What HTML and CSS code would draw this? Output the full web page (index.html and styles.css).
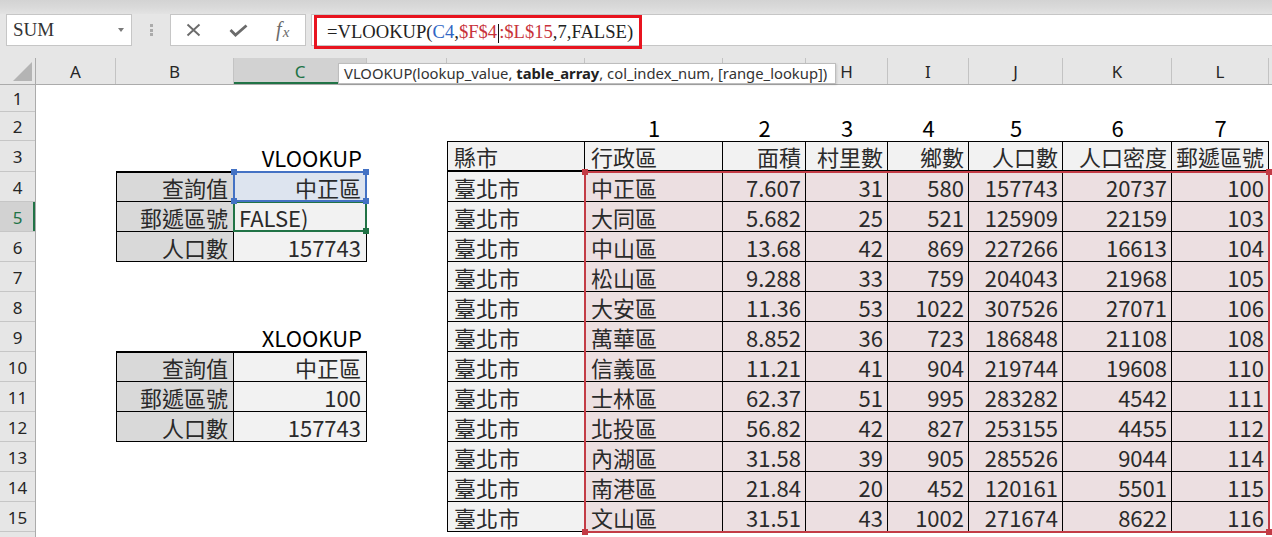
FILE: index.html
```html
<!DOCTYPE html>
<html lang="zh-Hant">
<head>
<meta charset="utf-8">
<title>VLOOKUP</title>
<link rel="stylesheet" href="styles.css">
</head>
<body>
<div class="top">
  <div class="ribbon-edge"></div>
  <div class="fbar">
    <div class="namebox"><span class="nb-text">SUM</span><span class="nb-arrow"></span></div>
    <div class="grip"><i></i><i></i><i></i></div>
    <div class="fbtns">
      <div class="slot"><svg width="15" height="14" viewBox="0 0 15 14"><path d="M1.5 1.5 L13.5 12.5 M13.5 1.5 L1.5 12.5" stroke="#6b6b6b" stroke-width="1.9" fill="none"/></svg></div>
      <div class="slot"><svg width="19" height="13" viewBox="0 0 19 13"><path d="M1.5 6 L6.5 11 L17.5 1.5" stroke="#6b6b6b" stroke-width="2.8" fill="none"/></svg></div>
      <div class="slot"><span class="fx">f<span class="fx-x">x</span></span></div>
    </div>
    <div class="finput">
      <div class="fhl"><span class="ftext">=VLOOKUP(<span class="rb">C4</span>,<span class="rr">$F$4</span><span class="caret"></span><span class="rr">:$L$15</span>,7,FALSE)</span></div>
    </div>
  </div>
</div>

<div class="colheads">
  <div class="corner"><span class="tri"></span></div>
  <div class="ch w-a">A</div>
  <div class="ch w-b">B</div>
  <div class="ch w-c sel">C</div>
  <div class="ch w-d">D</div>
  <div class="ch w-e">E</div>
  <div class="ch w-f">F</div>
  <div class="ch w-g">G</div>
  <div class="ch w-h">H</div>
  <div class="ch w-i">I</div>
  <div class="ch w-j">J</div>
  <div class="ch w-k">K</div>
  <div class="ch w-l">L</div>
  <div class="ch w-rest"></div>
</div>

<div class="tooltip">VLOOKUP(lookup_value, <b>table_array</b>, col_index_num, [range_lookup])</div>

<div class="sheet">
  <div class="rowheads">
    <div class="rh h27">1</div>
    <div class="rh h29">2</div>
    <div class="rh h31">3</div>
    <div class="rh">4</div>
    <div class="rh sel">5</div>
    <div class="rh">6</div>
    <div class="rh">7</div>
    <div class="rh">8</div>
    <div class="rh">9</div>
    <div class="rh">10</div>
    <div class="rh">11</div>
    <div class="rh">12</div>
    <div class="rh">13</div>
    <div class="rh">14</div>
    <div class="rh">15</div>
    <div class="rh"></div>
  </div>

  <div class="cells">
    <div class="title t-vl">VLOOKUP</div>
    <div class="ltab lt1">
      <div class="lc lab">查詢值</div>
      <div class="lc val c4">中正區<span class="selbox blue"><i class="k tl"></i><i class="k tr"></i><i class="k bl"></i><i class="k br"></i></span></div>
      <div class="lc lab">郵遞區號</div>
      <div class="lc val edit">FALSE)<span class="selbox green"><i class="k br"></i></span></div>
      <div class="lc lab">人口數</div>
      <div class="lc val">157743</div>
    </div>

    <div class="title t-xl">XLOOKUP</div>
    <div class="ltab lt2">
      <div class="lc lab">查詢值</div>
      <div class="lc val">中正區</div>
      <div class="lc lab">郵遞區號</div>
      <div class="lc val">100</div>
      <div class="lc lab">人口數</div>
      <div class="lc val">157743</div>
    </div>

    <div class="idx">
      <div>1</div><div>2</div><div>3</div><div>4</div><div>5</div><div>6</div><div>7</div>
    </div>

    <div class="btab">
      <div class="c h l">縣市</div><div class="c h l">行政區</div><div class="c h">面積</div><div class="c h">村里數</div><div class="c h">鄉數</div><div class="c h">人口數</div><div class="c h">人口密度</div><div class="c h">郵遞區號</div>

      <div class="c e l">臺北市</div><div class="c p l">中正區</div><div class="c p">7.607</div><div class="c p">31</div><div class="c p">580</div><div class="c p">157743</div><div class="c p">20737</div><div class="c p">100</div>
      <div class="c e l">臺北市</div><div class="c p l">大同區</div><div class="c p">5.682</div><div class="c p">25</div><div class="c p">521</div><div class="c p">125909</div><div class="c p">22159</div><div class="c p">103</div>
      <div class="c e l">臺北市</div><div class="c p l">中山區</div><div class="c p">13.68</div><div class="c p">42</div><div class="c p">869</div><div class="c p">227266</div><div class="c p">16613</div><div class="c p">104</div>
      <div class="c e l">臺北市</div><div class="c p l">松山區</div><div class="c p">9.288</div><div class="c p">33</div><div class="c p">759</div><div class="c p">204043</div><div class="c p">21968</div><div class="c p">105</div>
      <div class="c e l">臺北市</div><div class="c p l">大安區</div><div class="c p">11.36</div><div class="c p">53</div><div class="c p">1022</div><div class="c p">307526</div><div class="c p">27071</div><div class="c p">106</div>
      <div class="c e l">臺北市</div><div class="c p l">萬華區</div><div class="c p">8.852</div><div class="c p">36</div><div class="c p">723</div><div class="c p">186848</div><div class="c p">21108</div><div class="c p">108</div>
      <div class="c e l">臺北市</div><div class="c p l">信義區</div><div class="c p">11.21</div><div class="c p">41</div><div class="c p">904</div><div class="c p">219744</div><div class="c p">19608</div><div class="c p">110</div>
      <div class="c e l">臺北市</div><div class="c p l">士林區</div><div class="c p">62.37</div><div class="c p">51</div><div class="c p">995</div><div class="c p">283282</div><div class="c p">4542</div><div class="c p">111</div>
      <div class="c e l">臺北市</div><div class="c p l">北投區</div><div class="c p">56.82</div><div class="c p">42</div><div class="c p">827</div><div class="c p">253155</div><div class="c p">4455</div><div class="c p">112</div>
      <div class="c e l">臺北市</div><div class="c p l">內湖區</div><div class="c p">31.58</div><div class="c p">39</div><div class="c p">905</div><div class="c p">285526</div><div class="c p">9044</div><div class="c p">114</div>
      <div class="c e l">臺北市</div><div class="c p l">南港區</div><div class="c p">21.84</div><div class="c p">20</div><div class="c p">452</div><div class="c p">120161</div><div class="c p">5501</div><div class="c p">115</div>
      <div class="c e l">臺北市</div><div class="c p l">文山區</div><div class="c p">31.51</div><div class="c p">43</div><div class="c p">1002</div><div class="c p">271674</div><div class="c p">8622</div><div class="c p">116</div>

      <div class="range"><i class="k tl"></i><i class="k tr"></i><i class="k bl"></i><i class="k br"></i></div>
    </div>
  </div>
</div>
</body>
</html>
```
FILE: styles.css
```css
* { box-sizing: border-box; }
html, body { margin: 0; padding: 0; }
body {
  width: 1272px;
  height: 537px;
  overflow: hidden;
  background: #fff;
  position: relative;
  font-family: "Noto Sans", sans-serif;
  color: #222;
}

/* ---------- top: ribbon edge + formula bar ---------- */
.top { height: 58px; background: #e6e6e6; }
.ribbon-edge {
  height: 14px;
  background: linear-gradient(#d3d3d3, #dadada 55%, #e3e3e3);
}
.fbar { display: flex; height: 32px; padding-left: 6px; }
.namebox {
  width: 126px;
  border: 1px solid #c6c6c6;
  background: #fff;
  display: flex;
  align-items: center;
  padding-left: 6px;
}
.nb-text { font-family: "Liberation Serif", serif; font-size: 19px; color: #333; }
.nb-arrow {
  margin-left: auto;
  margin-right: 7px;
  width: 0; height: 0;
  border-left: 3.5px solid transparent;
  border-right: 3.5px solid transparent;
  border-top: 4px solid #7a7a7a;
}
.grip {
  width: 38px;
  display: flex;
  flex-direction: column;
  align-items: center;
  justify-content: center;
  gap: 1.5px;
}
.grip i { display: block; width: 3px; height: 3px; background: #ababab; }
.fbtns {
  width: 136px;
  border: 1px solid #c6c6c6;
  background: #fff;
  display: flex;
  align-items: center;
}
.slot { width: 45px; display: flex; justify-content: center; align-items: center; }
.fx {
  font-family: "Liberation Serif", serif;
  font-style: italic;
  font-size: 20px;
  color: #6b6b6b;
  line-height: 1;
  margin-top: -2px;
}
.fx-x { font-size: 15px; position: relative; top: 1px; margin-left: 1px; }
.finput {
  flex: 1;
  margin-left: 5px;
  border: 1px solid #c6c6c6;
  border-right: none;
  background: #fff;
  display: flex;
  align-items: flex-start;
}
.fhl {
  margin-left: 2px;
  width: 328px;
  height: 34px;
  flex: none;
  border: 3px solid #e8141f;
  padding-left: 10px;
  display: flex;
  align-items: center;
  white-space: nowrap;
  font-family: "Liberation Serif", serif;
  font-size: 18.6px;
  color: #222;
}
.rb { color: #2f66c4; }
.rr { color: #c8323b; }
.caret {
  display: inline-block;
  width: 1px;
  height: 19px;
  background: #111;
  vertical-align: middle;
  margin: 0 0.5px;
}

/* ---------- column headers ---------- */
.colheads {
  display: flex;
  height: 27px;
  background: #e6e6e6;
  border-bottom: 1px solid #ababab;
}
.corner {
  width: 36px;
  border-right: 1px solid #ababab;
  display: flex;
  justify-content: flex-end;
  align-items: flex-end;
  padding: 0 3px 3px 0;
}
.tri {
  width: 0; height: 0;
  border-left: 19px solid transparent;
  border-bottom: 19px solid #b4b4b4;
}
.ch {
  border-right: 1px solid #c3c3c3;
  display: flex;
  align-items: center;
  justify-content: center;
  font-size: 17px;
  color: #262626;
  padding-top: 1px;
}
.ch.sel { background: #d2d2d2; color: #217346; box-shadow: inset 0 -2px #217346; }
.w-a { width: 80px; }
.w-b { width: 118px; }
.w-c { width: 133px; }
.w-d { width: 80px; }
.w-e { width: 138px; }
.w-f { width: 138px; }
.w-g { width: 83px; }
.w-h { width: 82px; }
.w-i { width: 81px; }
.w-j { width: 94px; }
.w-k { width: 109px; }
.w-l { width: 97px; }
.w-rest { flex: 1; border-right: none; }

/* ---------- tooltip ---------- */
.tooltip {
  position: absolute;
  left: 338px;
  top: 63px;
  width: 498px;
  height: 21px;
  background: #fff;
  border: 1px solid #bdbdbd;
  box-shadow: 1px 1px 2px rgba(0,0,0,0.12);
  font-family: "Noto Sans", sans-serif;
  font-size: 14.8px;
  line-height: 19px;
  padding: 0 5px;
  color: #333;
  white-space: nowrap;
  z-index: 5;
}
.tooltip b { font-weight: 700; color: #222; }

/* ---------- sheet ---------- */
.sheet { display: flex; }
.rowheads {
  width: 36px;
  background: #e6e6e6;
  border-right: 1px solid #ababab;
  display: flex;
  flex-direction: column;
}
.rh {
  height: 30px;
  flex: none;
  border-bottom: 1px solid #c6c6c6;
  display: flex;
  align-items: center;
  justify-content: center;
  font-size: 17px;
  color: #262626;
  padding-top: 1px;
}
.rh.h27 { height: 27px; }
.rh.h29 { height: 29px; }
.rh.h31 { height: 31px; }
.rh.sel { background: #d2d2d2; color: #217346; box-shadow: inset -2px 0 #217346; }

.cells {
  flex: 1;
  display: grid;
  grid-template-columns: 80px 118px 133px 80px 138px 684px 1fr;
  grid-template-rows: 27px 29px 31px repeat(13, 30px);
  font-family: "Noto Sans CJK TC", "Noto Sans", sans-serif;
  font-size: 22px;
  line-height: 1;
}

.title {
  grid-column: 3;
  display: flex;
  align-items: center;
  justify-content: flex-end;
  padding-right: 5px;
  color: #000;
}
.t-vl { grid-row: 3; }
.t-xl { grid-row: 9; }

/* left small tables */
.ltab {
  grid-column: 2 / 4;
  margin-top: -1px;
  display: grid;
  grid-template-columns: 117px 133px;
  grid-template-rows: 29px 30px 30px;
  border-top: 2px solid #000;
  border-left: 1px solid #000;
}
.lt1 { grid-row: 4 / 7; }
.lt2 { grid-row: 10 / 13; }
.lc {
  border-right: 1px solid #000;
  border-bottom: 1px solid #000;
  display: flex;
  align-items: center;
  justify-content: flex-end;
  padding-right: 5px;
  color: #2a2a2a;
  position: relative;
}
.lab { background: #d9d9d9; }
.val { background: #f2f2f2; }
.c4 { background: #dde4ef; }
.edit { justify-content: flex-start; padding-left: 5px; }

.selbox {
  position: absolute;
  top: -2px;
  left: -1px;
  right: -1px;
  bottom: -1px;
  border: 2px solid #4472c4;
  z-index: 2;
}
.selbox.green { top: -1px; border-color: #217346; z-index: 1; }
.k {
  position: absolute;
  width: 6px;
  height: 6px;
  background: #4472c4;
}
.green .k { background: #217346; }
.k.tl { left: -4px; top: -4px; }
.k.tr { right: -4px; top: -4px; }
.k.bl { left: -4px; bottom: -4px; }
.k.br { right: -4px; bottom: -4px; }

/* column index numbers */
.idx {
  grid-row: 2;
  grid-column: 6;
  display: grid;
  grid-template-columns: 138px 83px 82px 81px 94px 109px 97px;
  color: #000;
}
.idx div { display: flex; align-items: center; justify-content: center; padding-top: 1px; }

/* big table */
.btab {
  grid-row: 3 / 16;
  grid-column: 5 / 7;
  position: relative;
  display: grid;
  grid-template-columns: 137px 138px 83px 82px 81px 94px 109px 97px;
  grid-template-rows: repeat(13, 30px);
  border-top: 1px solid #000;
  border-left: 1px solid #000;
}
.c {
  border-right: 1px solid #000;
  border-bottom: 1px solid #000;
  display: flex;
  align-items: center;
  justify-content: flex-end;
  padding: 0 4px 0 6px;
  color: #2a2a2a;
  white-space: nowrap;
}
.c.l { justify-content: flex-start; }
.c.h { background: #f2f2f2; border-bottom-width: 2px; }
.c.e { background: #f2f2f2; }
.c.p { background: #ecdfe1; }

.range {
  position: absolute;
  grid-row: 2 / 14;
  grid-column: 2 / 9;
  top: -1px;
  left: -1px;
  right: -1px;
  bottom: -1px;
  border: 2px solid #c33b45;
  pointer-events: none;
  z-index: 2;
}
.range .k { background: #c33b45; }
```
